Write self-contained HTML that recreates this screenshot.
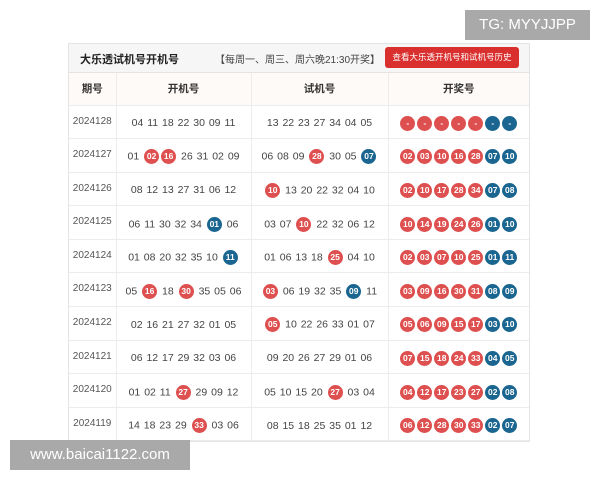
<html><head><style>
body{margin:0;width:600px;height:480px;background:#fff;font-family:"Liberation Sans","Noto Sans CJK SC",sans-serif;position:relative;overflow:hidden}
.wrap{position:absolute;left:68px;top:43px;width:462px;border:1px solid #e4e4e4;box-sizing:border-box}
.top{height:28px;background:#f6f6f6;position:relative;border-bottom:1px solid #e4e4e4}
.t1{position:absolute;left:11px;top:7px;font-size:11px;font-weight:bold;color:#222}
.t2{position:absolute;left:146px;top:7px;font-size:10px;color:#444}
.btn{position:absolute;left:316px;top:3px;width:134px;height:21px;background:#d9302f;border-radius:3px;color:#fff;font-size:8.5px;line-height:21px;text-align:center}
table{border-collapse:collapse;width:460px;table-layout:fixed}
td{border-right:1px solid #ececec;border-bottom:1px solid #ececec;height:33.6px;padding:0;padding-top:3px;text-align:center;font-size:10.5px;color:#444;white-space:nowrap;word-spacing:1px}
td:last-child{border-right:none}
tr.h td{background:#fdfaf7;font-weight:bold;color:#333;height:32px;padding-top:0;font-size:10.5px}
td.p{font-size:10px;color:#555;vertical-align:top;padding-top:10px;height:23.6px}
.b{display:inline-block;width:15px;height:15px;border-radius:50%;background:#de4f4f;color:#fff;font-size:8.5px;font-weight:bold;line-height:15px;text-align:center;vertical-align:middle;word-spacing:0;margin:0 1px}
.u{background:#1b6690}
.w{position:absolute;background:#a9a9a9;color:#fff}
</style></head><body>
<div class="wrap">
<div class="top"><span class="t1">大乐透试机号开机号</span><span class="t2">【每周一、周三、周六晚21:30开奖】</span><div class="btn">查看大乐透开机号和试机号历史</div></div>
<table>
<colgroup><col style="width:47px"><col style="width:135px"><col style="width:137px"><col style="width:141px"></colgroup>
<tr class="h"><td>期号</td><td>开机号</td><td>试机号</td><td>开奖号</td></tr>
<tr><td class="p">2024128</td><td>04 11 18 22 30 09 11</td><td>13 22 23 27 34 04 05</td><td><span class="b">-</span><span class="b">-</span><span class="b">-</span><span class="b">-</span><span class="b">-</span><span class="b u">-</span><span class="b u">-</span></td></tr>
<tr><td class="p">2024127</td><td>01 <span class="b">02</span><span class="b">16</span> 26 31 02 09</td><td>06 08 09 <span class="b">28</span> 30 05 <span class="b u">07</span></td><td><span class="b">02</span><span class="b">03</span><span class="b">10</span><span class="b">16</span><span class="b">28</span><span class="b u">07</span><span class="b u">10</span></td></tr>
<tr><td class="p">2024126</td><td>08 12 13 27 31 06 12</td><td><span class="b">10</span> 13 20 22 32 04 10</td><td><span class="b">02</span><span class="b">10</span><span class="b">17</span><span class="b">28</span><span class="b">34</span><span class="b u">07</span><span class="b u">08</span></td></tr>
<tr><td class="p">2024125</td><td>06 11 30 32 34 <span class="b u">01</span> 06</td><td>03 07 <span class="b">10</span> 22 32 06 12</td><td><span class="b">10</span><span class="b">14</span><span class="b">19</span><span class="b">24</span><span class="b">26</span><span class="b u">01</span><span class="b u">10</span></td></tr>
<tr><td class="p">2024124</td><td>01 08 20 32 35 10 <span class="b u">11</span></td><td>01 06 13 18 <span class="b">25</span> 04 10</td><td><span class="b">02</span><span class="b">03</span><span class="b">07</span><span class="b">10</span><span class="b">25</span><span class="b u">01</span><span class="b u">11</span></td></tr>
<tr><td class="p">2024123</td><td>05 <span class="b">16</span> 18 <span class="b">30</span> 35 05 06</td><td><span class="b">03</span> 06 19 32 35 <span class="b u">09</span> 11</td><td><span class="b">03</span><span class="b">09</span><span class="b">16</span><span class="b">30</span><span class="b">31</span><span class="b u">08</span><span class="b u">09</span></td></tr>
<tr><td class="p">2024122</td><td>02 16 21 27 32 01 05</td><td><span class="b">05</span> 10 22 26 33 01 07</td><td><span class="b">05</span><span class="b">06</span><span class="b">09</span><span class="b">15</span><span class="b">17</span><span class="b u">03</span><span class="b u">10</span></td></tr>
<tr><td class="p">2024121</td><td>06 12 17 29 32 03 06</td><td>09 20 26 27 29 01 06</td><td><span class="b">07</span><span class="b">15</span><span class="b">18</span><span class="b">24</span><span class="b">33</span><span class="b u">04</span><span class="b u">05</span></td></tr>
<tr><td class="p">2024120</td><td>01 02 11 <span class="b">27</span> 29 09 12</td><td>05 10 15 20 <span class="b">27</span> 03 04</td><td><span class="b">04</span><span class="b">12</span><span class="b">17</span><span class="b">23</span><span class="b">27</span><span class="b u">02</span><span class="b u">08</span></td></tr>
<tr><td class="p">2024119</td><td>14 18 23 29 <span class="b">33</span> 03 06</td><td>08 15 18 25 35 01 12</td><td><span class="b">06</span><span class="b">12</span><span class="b">28</span><span class="b">30</span><span class="b">33</span><span class="b u">02</span><span class="b u">07</span></td></tr>
</table>
</div>
<div class="w" style="left:465px;top:10px;width:125px;height:30px;line-height:30px;text-align:center;font-size:15px">TG: MYYJJPP</div>
<div class="w" style="left:10px;top:440px;width:180px;height:30px;line-height:30px;text-align:center;font-size:15px">www.baicai1122.com</div>
</body></html>
